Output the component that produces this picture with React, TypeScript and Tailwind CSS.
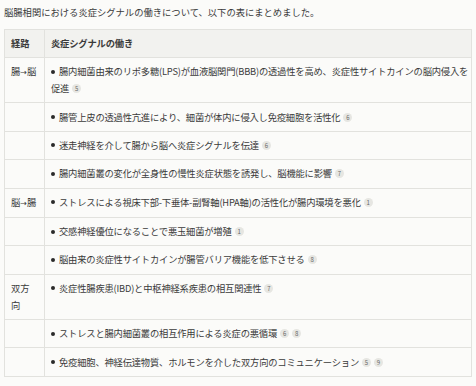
import React from 'react';

type Row = {
  route?: React.ReactNode;
  text: string;
  refs: number[];
};

const Arrow = () => <span className="font-['DejaVu_Sans',sans-serif] text-[8px]">→</span>;

const rows: Row[] = [
  { route: <>腸<Arrow />脳</>, text: '腸内細菌由来のリポ多糖(LPS)が血液脳関門(BBB)の透過性を高め、炎症性サイトカインの脳内侵入を促進', refs: [5] },
  { text: '腸管上皮の透過性亢進により、細菌が体内に侵入し免疫細胞を活性化', refs: [6] },
  { text: '迷走神経を介して腸から脳へ炎症シグナルを伝達', refs: [6] },
  { text: '腸内細菌叢の変化が全身性の慢性炎症状態を誘発し、脳機能に影響', refs: [7] },
  { route: <>脳<Arrow />腸</>, text: 'ストレスによる視床下部-下垂体-副腎軸(HPA軸)の活性化が腸内環境を悪化', refs: [1] },
  { text: '交感神経優位になることで悪玉細菌が増殖', refs: [1] },
  { text: '脳由来の炎症性サイトカインが腸管バリア機能を低下させる', refs: [8] },
  { route: '双方向', text: '炎症性腸疾患(IBD)と中枢神経系疾患の相互関連性', refs: [7] },
  { text: 'ストレスと腸内細菌叢の相互作用による炎症の悪循環', refs: [6, 8] },
  { text: '免疫細胞、神経伝達物質、ホルモンを介した双方向のコミュニケーション', refs: [5, 9] },
];

function Badge({ n }: { n: number }) {
  return (
    <span className="inline-block w-[9px] h-[9px] rounded-full bg-[#e6e6e2] text-[#666] text-[6px] leading-[9px] text-center ml-[3px] align-middle relative -top-px tracking-normal">
      {n}
    </span>
  );
}

export default function App() {
  return (
    <div className="min-h-screen bg-[#fbfbf9] px-1 pt-1 text-[#3a3a3a] text-[9.3px] leading-[17px] font-['Noto_Sans_CJK_JP','Noto_Sans',sans-serif]">
      <p>脳腸相関における炎症シグナルの働きについて、以下の表にまとめました。</p>

      <table className="mt-2 w-[468px] border-collapse border border-[#e2e2de] table-fixed">
        <thead>
          <tr className="bg-[#f2f2ef]">
            <th className="w-[40px] h-[28px] px-1.5 py-0 text-left font-bold border border-[#e2e2de]">経路</th>
            <th className="h-[28px] px-1.5 py-0 text-left font-bold tracking-[-0.18px] border border-[#e2e2de]">炎症シグナルの働き</th>
          </tr>
        </thead>
        <tbody>
          {rows.map((row, i) => (
            <tr key={i}>
              <td className="px-1.5 py-[5.2px] align-top leading-[17px] border border-[#e2e2de]">
                <div className="w-[26px] whitespace-nowrap">
                  {typeof row.route === 'string' ? (
                    <span className="block whitespace-normal break-all">{row.route}</span>
                  ) : (
                    row.route
                  )}
                </div>
              </td>
              <td className="pl-1.5 pr-[1px] py-[5.2px] align-top leading-[17px] tracking-[-0.2px] border border-[#e2e2de]">
                <span className="inline-block w-[4px] h-[4px] rounded-full bg-[#2a2a2a] mr-[4px] align-middle relative -top-px" />
                {row.text}
                {row.refs.map((n) => (
                  <Badge key={n} n={n} />
                ))}
              </td>
            </tr>
          ))}
        </tbody>
      </table>
    </div>
  );
}
